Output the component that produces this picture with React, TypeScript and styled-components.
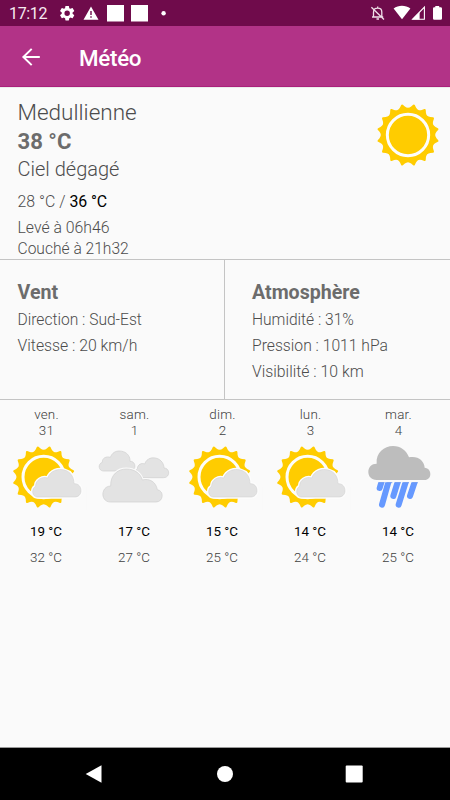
import React from "react";
import styled, { createGlobalStyle } from "styled-components";

const GlobalStyle = createGlobalStyle`
  * { box-sizing: border-box; }
  body { margin: 0; background: #fafafa; }
`;

const Screen = styled.div`
  width: 450px;
  height: 800px;
  display: flex;
  flex-direction: column;
  overflow: hidden;
  background: #fafafa;
  color: #4c4c4c;
  font-family: Roboto, "Liberation Sans", sans-serif;
  font-weight: 300;
`;

const StatusBar = styled.header`
  height: 26px;
  flex: none;
  display: flex;
  justify-content: space-between;
  background: #6f0b4b;
  color: #f6e9f1;
`;

const StatusLeft = styled.div`
  display: flex;
`;

const Clock = styled.span`
  width: 56px;
  padding-left: 9px;
  font-size: 16px;
  font-weight: 400;
  line-height: 28px;
  letter-spacing: -0.35px;
`;

const StatusIcons = styled.svg`
  display: block;
  height: 26px;
`;

const Toolbar = styled.nav`
  height: 61px;
  flex: none;
  display: flex;
  align-items: center;
  padding: 1px 0 0 21px;
  gap: 38px;
  background: #b23387;
  border-bottom: 1px solid #a9217b;
  color: #fff;
`;

const BackButton = styled.button`
  display: flex;
  width: 20px;
  height: 20px;
  padding: 0;
  border: 0;
  background: none;
  color: inherit;
`;

const Title = styled.h1`
  margin: 2px 0 0;
  font-size: 22.4px;
  font-weight: 500;
  line-height: 28px;
  letter-spacing: -0.3px;
`;

const Current = styled.section`
  height: 173px;
  flex: none;
  display: flex;
  justify-content: space-between;
  padding: 10px 8px 0 17.5px;
  border-top: 1px solid #ebebeb;
  border-bottom: 1px solid #c4c4c4;
`;

const Summary = styled.div`
  display: flex;
  flex-direction: column;
  white-space: nowrap;
`;

const Line = styled.div<{ $size: number; $height: number; $weight?: number; $gap?: number }>`
  margin-top: ${(p) => p.$gap ?? 0}px;
  font-size: ${(p) => p.$size}px;
  line-height: ${(p) => p.$height}px;
  height: ${(p) => p.$height}px;
  font-weight: ${(p) => p.$weight ?? 300};
  color: ${(p) => (p.$weight === 700 ? "#6c6c6c" : "inherit")};
`;

const High = styled.span`
  color: #000;
  font-weight: 400;
  letter-spacing: -0.1px;
`;

const CurrentIcon = styled.svg`
  width: 68px;
  height: 68px;
  margin-top: 3px;
`;

const Details = styled.section`
  height: 140px;
  flex: none;
  display: grid;
  grid-template-columns: 225px 225px;
  border-bottom: 1px solid #c4c4c4;
`;

const Panel = styled.div<{ $inset: number; $divided?: boolean }>`
  padding: 18px 0 0 ${(p) => p.$inset}px;
  border-right: ${(p) => (p.$divided ? "1px solid #c4c4c4" : "0")};
  white-space: nowrap;
`;

const PanelTitle = styled.h2`
  margin: 0;
  height: 28px;
  font-size: 19.6px;
  font-weight: 700;
  line-height: 30px;
  color: #6c6c6c;
`;

const Forecast = styled.section`
  flex: 1;
  display: grid;
  grid-template-columns: repeat(5, 88px);
  padding: 7px 0 0 2px;
`;

const Day = styled.article`
  display: flex;
  flex-direction: column;
  align-items: center;
`;

const DayName = styled.span`
  padding-left: 1px;
  font-size: 13.4px;
  line-height: 16px;
  height: 16px;
  letter-spacing: 0.2px;
  font-weight: 300;
  color: #404040;
`;

const DayIcon = styled.svg`
  width: 88px;
  height: 66px;
  margin-top: 5px;
`;

const Temp = styled.span<{ $low?: boolean }>`
  margin-top: ${(p) => (p.$low ? 14 : 10)}px;
  font-size: 13.4px;
  line-height: 16px;
  height: 16px;
  font-weight: ${(p) => (p.$low ? 400 : 300)};
  color: ${(p) => (p.$low ? "#000" : "#404040")};
`;

const SystemNav = styled.footer`
  height: 53px;
  flex: none;
  background: #000;
  border-top: 1px solid #999;
  display: grid;
  grid-template-columns: 188px 74px 184px;
  align-items: center;
  justify-items: center;
`;

const NavIcon = styled.svg`
  width: 20px;
  height: 20px;
`;

const TEETH = 16;

function sunPath(cx: number, cy: number) {
  const step = (Math.PI * 2) / TEETH;
  const at = (r: number, a: number) => `${(cx + r * Math.sin(a)).toFixed(2)} ${(cy - r * Math.cos(a)).toFixed(2)}`;
  let d = `M${at(81.5, 0)}`;
  for (let i = 0; i < TEETH; i++) {
    const a = i * step;
    d += `Q${at(82, a + step * 0.15)} ${at(86, a + step * 0.28)}`;
    d += `L${at(92, a + step * 0.43)}Q${at(95, a + step * 0.5)} ${at(92, a + step * 0.57)}`;
    d += `L${at(86, a + step * 0.72)}Q${at(82, a + step * 0.85)} ${at(81.5, a + step)}`;
  }
  return d + "Z";
}

const Sun = ({ cx, cy }: { cx: number; cy: number }) => (
  <g>
    <path d={sunPath(cx, cy)} fill="#ffcc00" />
    <circle cx={cx} cy={cy} r={62} fill="none" stroke="#fdfdfa" strokeWidth={9} />
  </g>
);

const CLOUD =
  "M112 291C96 291 93 266 107 259C106 240 127 228 143 234C151 212 174 205 193 210C212 215 222 231 222 251C236 250 243 261 243 272C243 284 234 291 225 291Z";

const PartlyCloudy = () => (
  <>
    <Sun cx={131} cy={231} />
    <path d="M186 260H260V330H186Z" fill="#fafafa" />
    <path d={CLOUD} fill="#e2e2e2" stroke="#fdfdfd" strokeWidth={10} strokeLinejoin="round" />
    <path d={CLOUD} fill="#e2e2e2" stroke="#cdcdcd" strokeWidth={1.5} />
  </>
);

const Cloudy = () => (
  <g fill="#e3e3e3" stroke="#cfcfcf" strokeWidth={2}>
    <path d="M310 213C296 213 292 192 307 187C306 174 319 168 331 172C339 151 358 151 370 155C383 159 391 171 390 184C404 182 410 203 399 209C396 212 392 213 386 213Z" />
    <path d="M421 233C407 231 403 212 412 206C413 193 425 188 434 192C440 174 458 171 470 175C484 179 492 192 492 204C507 204 511 224 499 231C497 232 495 233 491 233Z" />
    <path
      d="M331 306C301 306 301 259 332 258C331 222 356 207 379 207C404 207 422 221 427 240C449 234 468 246 472 269C493 272 491 306 468 306Z"
      stroke="#fafafa" strokeWidth={9}
    />
    <path d="M331 306C301 306 301 259 332 258C331 222 356 207 379 207C404 207 422 221 427 240C449 234 468 246 472 269C493 272 491 306 468 306Z" />
  </g>
);

const Rain = () => (
  <>
    <g stroke="#6699ff" strokeWidth={18} strokeLinecap="round">
      <path d="M95 244L89 264M117 240L96 314M145 240L130 288M169 240L146 314M196 240L180 288" />
    </g>
    <path d="M60 228H230V247H60Z" fill="#fafafa" />
    <path d="M86 248H103M110 248H127M135 248H152M160 248H177M187 248H203" stroke="#719bed" strokeWidth={2.5} />
    <path d="M80 240C64 240 55 229 55 216C55 201 65 191 80 191C77 158 103 138 129 138C152 138 170 152 177 172C202 166 223 181 224 203C235 204 241 212 241 222C241 233 234 240 224 240Z" fill="#bdbdbd" />
  </>
);

type Kind = "partly" | "cloudy" | "rain";

const icons: Record<Kind, { box: string; Art: () => React.JSX.Element }> = {
  partly: { box: "6 132 264 198", Art: PartlyCloudy },
  cloudy: { box: "270 132 264 198", Art: Cloudy },
  rain: { box: "12 132 264 198", Art: Rain },
};

const days: { name: string; date: number; kind: Kind; low: number; high: number }[] = [
  { name: "ven.", date: 31, kind: "partly", low: 19, high: 32 },
  { name: "sam.", date: 1, kind: "cloudy", low: 17, high: 27 },
  { name: "dim.", date: 2, kind: "partly", low: 15, high: 25 },
  { name: "lun.", date: 3, kind: "partly", low: 14, high: 24 },
  { name: "mar.", date: 4, kind: "rain", low: 14, high: 25 },
];

const gearPath =
  "M19.14 12.94c.04-.3.06-.61.06-.94s-.02-.64-.07-.94l2.03-1.58a.49.49 0 0 0 .12-.61l-1.92-3.32a.49.49 0 0 0-.59-.22l-2.39.96a7 7 0 0 0-1.62-.94l-.36-2.54A.48.48 0 0 0 13.92 2.4h-3.84a.48.48 0 0 0-.47.41l-.36 2.54c-.59.24-1.13.57-1.62.94l-2.39-.96a.48.48 0 0 0-.59.22L2.74 8.87a.48.48 0 0 0 .12.61l2.03 1.58a7.5 7.5 0 0 0 0 1.88l-2.03 1.58a.49.49 0 0 0-.12.61l1.92 3.32c.12.22.37.29.59.22l2.39-.96c.5.38 1.03.7 1.62.94l.36 2.54c.05.24.24.41.48.41h3.84c.24 0 .44-.17.47-.41l.36-2.54a7 7 0 0 0 1.62-.94l2.39.96c.22.08.47 0 .59-.22l1.92-3.32a.48.48 0 0 0-.12-.61zM12 15.6a3.6 3.6 0 1 1 0-7.2 3.6 3.6 0 0 1 0 7.2z";

export default function App() {
  return (
    <>
      <GlobalStyle />
      <Screen>
        <StatusBar>
          <StatusLeft>
            <Clock>17:12</Clock>
            <StatusIcons width="120" viewBox="56 0 120 26" fill="#fff">
              <path d={gearPath} transform="translate(58.1 4.1) scale(.755)" />
              <path fillRule="evenodd" d="M91 6.6L98.5 19.8H83.5ZM90.3 11V15H91.7V11ZM90.3 16.3V17.8H91.7V16.3Z" />
              <path d="M107 5H124V21.5H107ZM131 5H148V21.5H131Z" />
              <circle cx="163.6" cy="13.2" r="2.2" />
            </StatusIcons>
          </StatusLeft>
          <StatusIcons width="90" viewBox="360 0 90 26" fill="#fff">
            <path
              d="M373.5 17V12C373.5 9.3 375 8.2 377.7 8.2S381.8 9.8 381.8 12V17M372 17H383.2M377.7 6.5V8.2M376.5 19H379M371.4 7.2L384 19.5"
              fill="none" stroke="#f0dfe9" strokeWidth="1.3"
            />
            <path d="M393.6 8.6C398.5 4.8 405.4 4.8 410.4 8.6L402 19.3Z" />
            <path d="M424.4 7.2V19.3H412.6Z" fill="none" stroke="#fff" strokeWidth="1.1" />
            <path d="M419.6 12V19.5H412Z" />
            <path d="M435.3 6H439.2V7.2H440.6Q442 7.2 442 8.5V18.4Q442 19.8 440.6 19.8H434.3Q433 19.8 433 18.4V8.5Q433 7.2 434.3 7.2H435.3Z" />
          </StatusIcons>
        </StatusBar>
        <Toolbar>
          <BackButton aria-label="Retour">
            <svg width="20" height="20" viewBox="0 0 20 20" fill="none" stroke="currentColor" strokeWidth="2">
              <path d="M18.8 10H2.5M10.7 1.9L2.4 10L10.7 18.1" />
            </svg>
          </BackButton>
          <Title>Météo</Title>
        </Toolbar>
        <Current>
          <Summary>
            <Line $size={22.5} $height={28}>Medullienne</Line>
            <Line $size={22.1} $height={31} $weight={700}>38 °C</Line>
            <Line $size={20} $height={24}>Ciel dégagé</Line>
            <Line $size={15.9} $height={22} $gap={10}>28 °C / <High>36 °C</High></Line>
            <Line $size={15.8} $height={19} $gap={5}>Levé à 06h46</Line>
            <Line $size={15.6} $height={21} $gap={2}>Couché à 21h32</Line>
          </Summary>
          <CurrentIcon viewBox="43 33 204 204">
            <Sun cx={145} cy={135} />
          </CurrentIcon>
        </Current>
        <Details>
          <Panel $inset={17.5} $divided>
            <PanelTitle>Vent</PanelTitle>
            <Line $size={15.6} $height={28}>Direction : Sud-Est</Line>
            <Line $size={15.8} $height={24}>Vitesse : 20 km/h</Line>
          </Panel>
          <Panel $inset={27}>
            <PanelTitle>Atmosphère</PanelTitle>
            <Line $size={15.6} $height={28}>Humidité : 31%</Line>
            <Line $size={15.7} $height={24}>Pression : 1011 hPa</Line>
            <Line $size={15.8} $height={28}>Visibilité : 10 km</Line>
          </Panel>
        </Details>
        <Forecast>
          {days.map(({ name, date, kind, low, high }) => {
            const { box, Art } = icons[kind];
            return (
              <Day key={name}>
                <DayName>{name}</DayName>
                <DayName>{date}</DayName>
                <DayIcon viewBox={box}>
                  <Art />
                </DayIcon>
                <Temp $low>{low} °C</Temp>
                <Temp>{high} °C</Temp>
              </Day>
            );
          })}
        </Forecast>
        <SystemNav>
          <NavIcon viewBox="0 0 20 20" fill="#fff"><path d="M17.5 1.2V18.8L1.7 10Z" /></NavIcon>
          <NavIcon viewBox="0 0 20 20" fill="#fff"><circle cx="10" cy="10" r="8" /></NavIcon>
          <NavIcon viewBox="0 0 20 20" fill="#fff"><rect x="1.7" y="1.5" width="17" height="17" rx="1" /></NavIcon>
        </SystemNav>
      </Screen>
    </>
  );
}
